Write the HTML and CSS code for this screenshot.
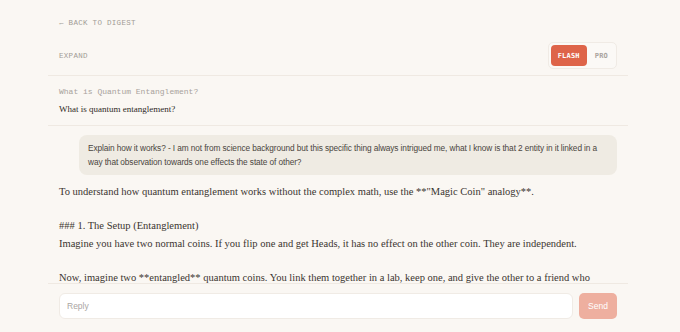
FILE: index.html
```html
<!DOCTYPE html>
<html lang="en">
<head>
<meta charset="utf-8">
<title>Quantum Entanglement</title>
<link rel="stylesheet" href="styles.css">
</head>
<body>
<div class="page">
  <header class="header">
    <a class="back" href="#">← BACK TO DIGEST</a>
    <div class="toolbar">
      <span class="expand">EXPAND</span>
      <div class="toggle">
        <button class="tog active">FLASH</button>
        <button class="tog">PRO</button>
      </div>
    </div>
  </header>
  <section class="question">
    <div class="q-title">What is Quantum Entanglement?</div>
    <div class="q-text">What is quantum entanglement?</div>
  </section>
  <main class="thread">
    <div class="bubble">Explain how it works? - I am not from science background but this specific thing always intrigued me, what I know is that 2 entity in it linked in a way that observation towards one effects the state of other?</div>
    <div class="answer">To understand how quantum entanglement works without the complex math, use the **"Magic Coin" analogy**.

### 1. The Setup (Entanglement)
Imagine you have two normal coins. If you flip one and get Heads, it has no effect on the other coin. They are independent.

Now, imagine two **entangled** quantum coins. You link them together in a lab, keep one, and give the other to a friend who
travels to the other side of the world.</div>
  </main>
  <footer class="composer">
    <input class="reply" type="text" placeholder="Reply">
    <button class="send">Send</button>
  </footer>
</div>
</body>
</html>
```
FILE: styles.css
```css
* { box-sizing: border-box; }
html, body { margin: 0; padding: 0; }
body {
  background: #faf7f3;
  color: #3a3530;
  font-family: "Liberation Serif", serif;
}
.page {
  height: 332px;
  display: flex;
  flex-direction: column;
  overflow: hidden;
}
.header, .question, .thread, .composer {
  width: 580px;
  margin-left: 48px;
  padding-left: 11px;
  padding-right: 11px;
}
.header {
  padding-top: 17px;
  padding-bottom: 7px;
  border-bottom: 1px solid #efe9e2;
}
.back {
  display: block;
  font-family: "Liberation Mono", monospace;
  font-size: 7.5px;
  letter-spacing: 0.3px;
  line-height: 12px;
  color: #a29c96;
  text-decoration: none;
}
.toolbar {
  margin-top: 14px;
  display: flex;
  align-items: center;
  justify-content: space-between;
  height: 25px;
}
.expand {
  font-family: "Liberation Mono", monospace;
  font-size: 7.5px;
  letter-spacing: 0.3px;
  color: #a29c96;
}
.toggle {
  display: flex;
  gap: 2px;
  padding: 2px;
  border: 1px solid #f0ebe5;
  border-radius: 5px;
  background: #fbf9f6;
}
.tog {
  border: 0;
  background: transparent;
  font-family: "DejaVu Sans Mono", monospace;
  font-size: 7px;
  font-weight: bold;
  letter-spacing: 0.2px;
  color: #aaa49e;
  height: 21px;
  padding: 0 6px;
  border-radius: 4px;
}
.tog.active {
  background: #de6449;
  color: #ffffff;
  padding: 0 7px;
}
.question {
  padding-top: 10px;
  padding-bottom: 10px;
  border-bottom: 1px solid #efe9e2;
}
.q-title {
  font-family: "Liberation Mono", monospace;
  font-size: 8px;
  line-height: 12px;
  color: #a8a29c;
}
.q-text {
  margin-top: 5px;
  font-size: 9px;
  line-height: 12px;
  color: #2f2a26;
}
.thread {
  flex: 1;
  overflow: hidden;
  padding-top: 9px;
}
.bubble {
  margin-left: 20px;
  background: #efebe3;
  border-radius: 8px;
  padding: 6px 9px;
  font-family: "Liberation Sans", sans-serif;
  font-size: 8.3px;
  letter-spacing: -0.1px;
  line-height: 14px;
  color: #4a4540;
}
.answer {
  margin-top: 8px;
  white-space: pre-wrap;
  font-size: 10.5px;
  line-height: 17.2px;
  color: #3a3530;
}
.composer {
  border-top: 1px solid #efe9e2;
  display: flex;
  gap: 6px;
  padding-top: 9px;
  padding-bottom: 13px;
}
.reply {
  flex: 1;
  height: 26px;
  border: 1px solid #f0ebe5;
  border-radius: 6px;
  background: #ffffff;
  padding: 0 7px;
  font-family: "Liberation Sans", sans-serif;
  font-size: 8.5px;
  color: #3a3530;
  outline: none;
}
.reply::placeholder { color: #aaa6a2; }
.send {
  width: 38px;
  height: 26px;
  border: 0;
  border-radius: 5px;
  background: #eeaf9f;
  color: #ffffff;
  font-family: "Liberation Sans", sans-serif;
  font-size: 8.5px;
}
```
